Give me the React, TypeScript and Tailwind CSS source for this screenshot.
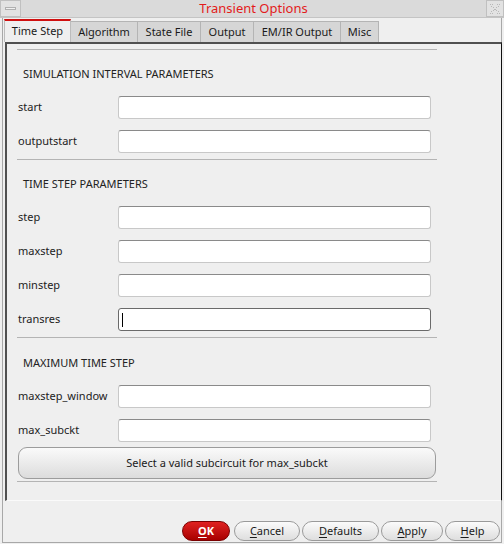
import React from "react";

const font = { fontFamily: '"Noto Sans", "Open Sans", sans-serif' };

function Field({ label, focused }: { label: string; focused?: boolean }) {
  return (
    <div className="flex items-center h-[23px]">
      <div className="w-[101px] pl-[1px] text-[11px] text-[#222222]">{label}</div>
      <div
        className={
          "w-[313px] h-[23px] bg-white rounded-[3px] border flex items-center " +
          (focused
            ? "border-[#6a6a6a]"
            : "border-[#c8c8c8] border-t-[#8a8a8a]")
        }
      >
        {focused && <div className="ml-[3px] w-[1px] h-[14px] bg-black" />}
      </div>
    </div>
  );
}

function Sep() {
  return <div className="w-[420px] h-[1px] bg-[#b4b4b4]" />;
}

function Header({ text, h, pt }: { text: string; h: string; pt: string }) {
  return (
    <div className={h + " " + pt + " pl-[6px] text-[11px] leading-[16px] text-[#222222]"}>
      {text}
    </div>
  );
}

function BtmButton({ children, w }: { children: React.ReactNode; w: string }) {
  return (
    <div
      className={
        w +
        " h-[20px] rounded-full border border-[#9a9a9a] bg-gradient-to-b from-[#fbfbfb] to-[#dedede] flex items-center justify-center text-[11px] text-[#1a1a1a]"
      }
    >
      {children}
    </div>
  );
}

export default function App() {
  return (
    <div className="w-[504px] h-[544px] bg-[#efefef] flex flex-col" style={font}>
      {/* Title bar */}
      <div className="h-[18px] flex bg-[#dadada] border-b border-[#c4c4c4]">
        <div className="w-[21px] h-[17px] border border-[#c0c0c0] bg-[#e2e2e2] flex items-center justify-center">
          <div className="w-[11px] h-[3px] border border-[#b0b0b0] bg-[#f0f0f0]" />
        </div>
        <div className="flex-1 flex items-center justify-center text-[13px] text-[#e31b1b] leading-none">
          Transient Options
        </div>
        <div className="w-[18px] h-[17px] border border-[#c0c0c0] bg-[#e2e2e2] flex items-center justify-center">
          <svg width="12" height="12" viewBox="0 0 12 12">
            <g fill="#b8b8b8">
              <rect x="1" y="1" width="1" height="1" />
              <rect x="3" y="1" width="1" height="1" />
              <rect x="8" y="1" width="1" height="1" />
              <rect x="10" y="1" width="1" height="1" />
              <rect x="2" y="3" width="1" height="1" />
              <rect x="9" y="3" width="1" height="1" />
              <rect x="4" y="4" width="1" height="1" />
              <rect x="7" y="4" width="1" height="1" />
              <rect x="5" y="6" width="2" height="1" />
              <rect x="4" y="7" width="1" height="1" />
              <rect x="7" y="7" width="1" height="1" />
              <rect x="2" y="8" width="1" height="1" />
              <rect x="9" y="8" width="1" height="1" />
              <rect x="1" y="10" width="1" height="1" />
              <rect x="3" y="10" width="1" height="1" />
              <rect x="8" y="10" width="1" height="1" />
              <rect x="10" y="10" width="1" height="1" />
            </g>
          </svg>
        </div>
      </div>

      {/* Window body */}
      <div className="flex-1 mx-[2px] mb-[1px] border-l border-r border-b border-[#a8a8a8] flex flex-col">
        {/* Tabs */}
        <div className="flex items-end h-[24px] pl-[1px]">
          <div className="w-[67px] h-[23px] border-t-2 border-t-[#d01010] border-l border-r border-[#bcbcbc] bg-[#efefef] flex items-center justify-center text-[11px] text-[#1a1a1a]">
            Time Step
          </div>
          {[
            ["Algorithm", "w-[67px]"],
            ["State File", "w-[63px]"],
            ["Output", "w-[53px]"],
            ["EM/IR Output", "w-[87px]"],
            ["Misc", "w-[38px]"],
          ].map(([t, w]) => (
            <div
              key={t}
              className={
                w +
                " h-[21px] border-t border-r border-[#b4b4b4] bg-[#d6d6d6] flex items-center justify-center text-[11px] text-[#1a1a1a]"
              }
            >
              {t}
            </div>
          ))}
        </div>

        {/* Frame */}
        <div className="ml-[2px] w-[497px] h-[459px] border-t-2 border-l-2 border-t-[#505050] border-l-[#505050] border-r border-r-[#101010] border-b border-b-[#fafafa] pl-[10px] pt-[5px]">
          <Sep />
          <Header text="SIMULATION INTERVAL PARAMETERS" h="h-[46px]" pt="pt-[16px]" />
          <div className="flex flex-col gap-[11px]">
            <Field label="start" />
            <Field label="outputstart" />
          </div>
          <div className="h-[6px]" />
          <Sep />
          <Header text="TIME STEP PARAMETERS" h="h-[46px]" pt="pt-[16px]" />
          <div className="flex flex-col gap-[11px]">
            <Field label="step" />
            <Field label="maxstep" />
            <Field label="minstep" />
            <Field label="transres" focused />
          </div>
          <div className="h-[6px]" />
          <Sep />
          <Header text="MAXIMUM TIME STEP" h="h-[47px]" pt="pt-[17px]" />
          <div className="flex flex-col gap-[11px]">
            <Field label="maxstep_window" />
            <Field label="max_subckt" />
          </div>
          <div className="h-[5px]" />
          <div className="ml-[1px] w-[418px] h-[32px] rounded-[9px] border border-[#9c9c9c] bg-gradient-to-b from-[#fafafa] to-[#dcdcdc] flex items-center justify-center text-[11px] text-[#1a1a1a]">
            Select a valid subcircuit for max_subckt
          </div>
          <div className="h-[2px]" />
          <Sep />
        </div>

        {/* Bottom buttons */}
        <div className="flex-1 flex items-end justify-end pb-[1px] pr-[1px] gap-[2px]">
          <div className="w-[48px] h-[20px] rounded-full border border-[#7a0000] bg-gradient-to-b from-[#e02020] to-[#a80000] flex items-center justify-center text-[11px] font-bold text-white mr-[2px]">
            <span className="underline underline-offset-2">O</span>K
          </div>
          <BtmButton w="w-[66px]">
            <span className="underline underline-offset-2">C</span>ancel
          </BtmButton>
          <BtmButton w="w-[77px]">
            <span className="underline underline-offset-2">D</span>efaults
          </BtmButton>
          <BtmButton w="w-[62px]">
            <span className="underline underline-offset-2">A</span>pply
          </BtmButton>
          <BtmButton w="w-[55px]">
            <span className="underline underline-offset-2">H</span>elp
          </BtmButton>
        </div>
      </div>
    </div>
  );
}
